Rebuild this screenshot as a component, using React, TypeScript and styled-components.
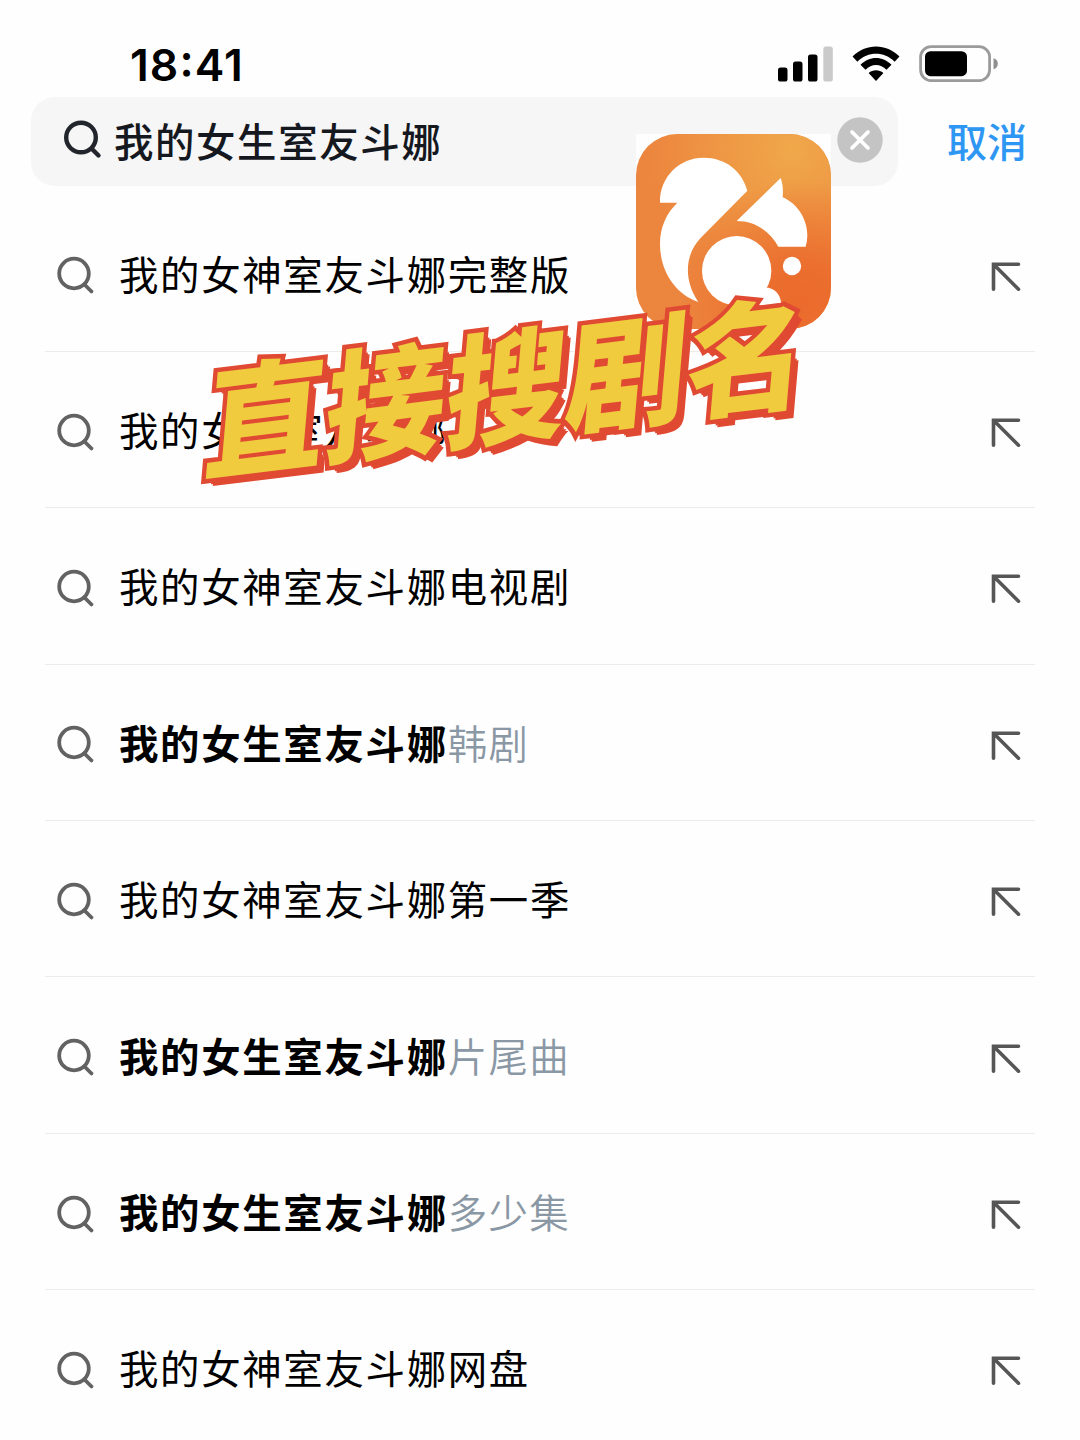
import React from 'react'
import styled, { createGlobalStyle } from 'styled-components';

const GlobalStyle = createGlobalStyle`
  *{
    box-sizing: border-box;
  }
  body{
    margin: 0;
    background: #fefefe;
    font-family: "Liberation Sans", "Noto Sans CJK SC", sans-serif;
  }
`;
const Screen = styled.main`
  position: relative;
  width: 1080px;
  height: 1440px;
  overflow: hidden;
  background: #fefefe;
`;
const StatusBar = styled.header`
  display: flex;
  justify-content: space-between;
  align-items: center;
  height: 97px;
  padding: 33px 81px 0 130px;
`;
const Time = styled.span`
  font-family: Inter, sans-serif;
  font-size: 44.4px;
  font-weight: 600;
  font-feature-settings: "calt" 1, "case" 1;
  letter-spacing: 1.1px;
  line-height: 64px;
  color: #000;
`;
const StatusIcons = styled.div`
  display: flex;
  align-items: center;
  gap: 19px;
  height: 64px;
  padding-bottom: 3px;
  svg{
    display: block;
  }
`;
const SearchRow = styled.div`
  display: flex;
  align-items: center;
  height: 89px;
  padding-left: 31px;
`;
const SearchBox = styled.div`
  display: flex;
  align-items: center;
  width: 867px;
  height: 89px;
  padding: 0 15px 4px 33px;
  border-radius: 24px;
  background: #f6f6f6;
  svg{
    display: block;
    flex: none;
  }
`;
const Keyword = styled.span`
  flex: 1;
  margin-left: 11px;
  padding-top: 6px;
  font-size: 39.4px;
  font-weight: 500;
  letter-spacing: 1.65px;
  line-height: 60px;
  white-space: nowrap;
  color: #15181e;
`;
const Cancel = styled.span`
  margin-left: 49px;
  padding-top: 2px;
  font-size: 40px;
  font-weight: 500;
  line-height: 60px;
  color: #2e96f3;
`;
const List = styled.ul`
  margin: 9.5px 45px 0;
  padding: 0;
  list-style: none;
`;
const Item = styled.li`
  display: flex;
  align-items: center;
  height: 156.4px;
  padding: 5px 13px 0 12px;
  border-bottom: 1.5px solid #ececec;
  svg{
    display: block;
    flex: none;
  }
`;
const Label = styled.span<{ $match: boolean }>`
  flex: 1;
  margin-left: 23px;
  font-size: 39.4px;
  font-weight: ${({ $match }) => ($match ? 700 : 400)};
  letter-spacing: 1.7px;
  line-height: 60px;
  white-space: nowrap;
  color: #000;
`;
const Suffix = styled.span`
  font-weight: 350;
  letter-spacing: 1.4px;
  color: #8a97a4;
`;
const AppIcon = styled.div`
  position: absolute;
  left: 636px;
  top: 134px;
  width: 195px;
  height: 195px;
  background: #fefefe;
  svg{
    display: block;
  }
`;
const Caption = styled.div`
  position: absolute;
  left: 204px;
  top: 294px;
  display: grid;
  transform: rotate(-7deg) skewX(-12deg);
`;
const CaptionLayer = styled.span<{ $back?: boolean }>`
  grid-area: 1 / 1;
  font-family: "Noto Sans CJK SC", sans-serif;
  font-size: 121px;
  font-weight: 900;
  letter-spacing: 0.4px;
  line-height: 174px;
  white-space: nowrap;
  color: ${({ $back }) => ($back ? '#e04a32' : '#f0cb3e')};
  -webkit-text-stroke: ${({ $back }) => ($back ? '9px #e04a32' : '0')};
  text-shadow: ${({ $back }) => ($back ? '2px 2px 0 #e04a32, 4px 4px 0 #e04a32, 6px 6px 0 #e04a32, 8px 8px 0 #e04a32' : 'none')};
  stroke-linejoin: round;
`;

const SearchIcon = ({ color, strokeWidth }: { color: string; strokeWidth: number }) => (
  <svg width="39" height="39" viewBox="0 0 39 39" fill="none" stroke={color} strokeWidth={strokeWidth} strokeLinecap="round">
    <circle cx="17" cy="17.5" r="14.8" />
    <path d="M27.5 28.5L34.5 35.5" />
  </svg>
);

const FillIcon = () => (
  <svg width="32" height="32" viewBox="0 0 32 32" fill="none" stroke="#565656" strokeWidth="3.6" strokeLinecap="round">
    <path d="M28.5 4.2H3.5V29.2M4 4.7L28.5 29.2" />
  </svg>
);

const ClearIcon = () => (
  <svg width="46" height="46" viewBox="0 0 46 46">
    <circle cx="23" cy="23" r="22.7" fill="#c4c4c4" />
    <path d="M15 15L31 31M31 15L15 31" stroke="#fff" strokeWidth="3.8" strokeLinecap="round" />
  </svg>
);

const Signal = () => (
  <svg width="56" height="36" viewBox="0 0 56 36">
    <rect x="1" y="21.5" width="9.5" height="14" rx="2.6" />
    <rect x="16" y="15.5" width="9.5" height="20" rx="2.6" />
    <rect x="31" y="8.5" width="9.5" height="27" rx="2.6" />
    <rect x="46.3" y="0.5" width="9.5" height="35" rx="2.6" fill="#cacaca" />
  </svg>
);

const Wifi = () => (
  <svg width="48" height="36" viewBox="0 0 48 36">
    <path d="M0.5 10.6C13.5-3 34.5-3 47.5 10.6L42.6 15.8C32 5.2 16 5.2 5.4 15.8Z" />
    <path d="M8.5 18.8C17 9.6 31 9.6 39.5 18.8L34.5 23.8C28.5 17.5 19.5 17.5 13.5 23.8Z" />
    <path d="M16.6 27C20.8 23.2 27.2 23.2 31.4 27L24 35Z" />
  </svg>
);

const Battery = () => (
  <svg width="80" height="38" viewBox="0 0 80 38">
    <rect x="1.6" y="1.6" width="69" height="34" rx="10.5" fill="none" stroke="#9b9b9b" strokeWidth="2.8" />
    <rect x="6" y="6.2" width="42" height="25" rx="5.5" />
    <path d="M74.5 13.2C77.3 14 78.8 16 78.8 18.7C78.8 21.4 77.3 23.4 74.5 24.2Z" fill="#8f8f8f" />
  </svg>
);

const Squirrel = () => (
  <svg width="195" height="195" viewBox="48 42 585 585">
    <defs>
      <radialGradient id="glow" cx="0.8" cy="0.08" r="0.75">
        <stop offset="0" stopColor="#f0a84a" />
        <stop offset="1" stopColor="#f0a84a" stopOpacity="0" />
      </radialGradient>
      <radialGradient id="deep" cx="0.85" cy="0.85" r="0.62">
        <stop offset="0" stopColor="#eb6a2c" />
        <stop offset="0.3" stopColor="#eb6a2c" stopOpacity="0.85" />
        <stop offset="1" stopColor="#eb6a2c" stopOpacity="0" />
      </radialGradient>
    </defs>
    <rect x="48" y="42" width="585" height="585" rx="124" fill="#ec853e" />
    <rect x="48" y="42" width="585" height="585" rx="124" fill="url(#glow)" />
    <rect x="48" y="42" width="585" height="585" rx="124" fill="url(#deep)" />
    <g fill="#fff">
      <path d="M120 248C118 172 178 113 250 113C318 113 366 153 382 212L244 352C195 400 189 480 235 546C165 522 120 452 120 372C120 322 139 280 172 248Z" />
      <path d="M350 303L482 174C488 190 490 210 488 232C535 252 562 300 562 345Q562 365 557 380H475C449 333 405 303 350 303Z" />
      <circle cx="350" cy="452" r="104" />
      <path d="M430 503C460 500 480 520 483 547Q483 556 472 556H350Z" />
      <circle cx="516" cy="438" r="27.5" />
    </g>
  </svg>
);

interface SuggestionData {
  text: string;
  suffix?: string;
}

const keyword = "我的女生室友斗娜";
const suggestions: SuggestionData[] = [
  { text: "我的女神室友斗娜完整版" },
  { text: "我的女神室友斗娜" },
  { text: "我的女神室友斗娜电视剧" },
  { text: keyword, suffix: "韩剧" },
  { text: "我的女神室友斗娜第一季" },
  { text: keyword, suffix: "片尾曲" },
  { text: keyword, suffix: "多少集" },
  { text: "我的女神室友斗娜网盘" },
];

const App = () => {
  return (
    <>
      <GlobalStyle />
      <Screen>
        <StatusBar>
          <Time>18:41</Time>
          <StatusIcons>
            <Signal />
            <Wifi />
            <Battery />
          </StatusIcons>
        </StatusBar>
        <SearchRow>
          <SearchBox>
            <SearchIcon color="#22262c" strokeWidth={4.4} />
            <Keyword>{keyword}</Keyword>
            <ClearIcon />
          </SearchBox>
          <Cancel>取消</Cancel>
        </SearchRow>
        <List>
          {suggestions.map(({ text, suffix }) => (
            <Item key={text + suffix}>
              <SearchIcon color="#626262" strokeWidth={3.8} />
              <Label $match={!!suffix}>
                {text}
                {suffix && <Suffix>{suffix}</Suffix>}
              </Label>
              <FillIcon />
            </Item>
          ))}
        </List>
        <AppIcon>
          <Squirrel />
        </AppIcon>
        <Caption>
          <CaptionLayer $back aria-hidden>直接搜剧名</CaptionLayer>
          <CaptionLayer>直接搜剧名</CaptionLayer>
        </Caption>
      </Screen>
    </>
  )
}

export default App;
